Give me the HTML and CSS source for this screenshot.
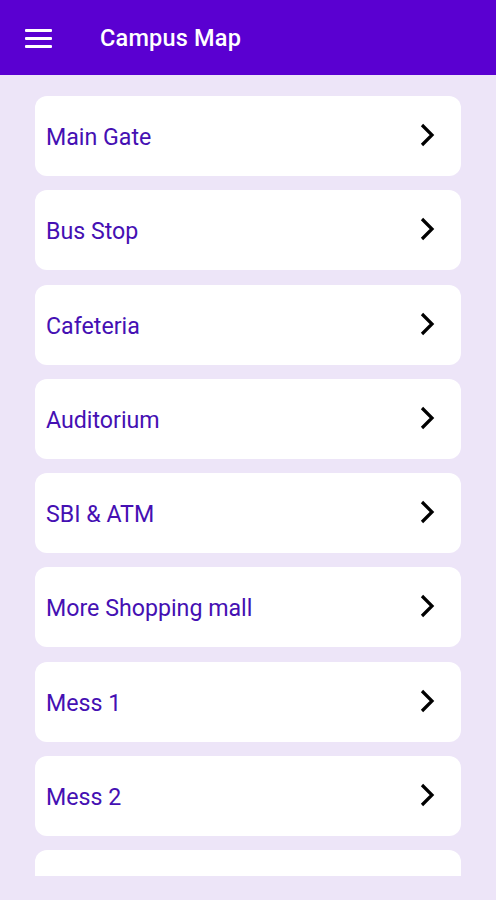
FILE: index.html
```html
<!DOCTYPE html>
<html lang="en">
<head>
  <meta charset="UTF-8">
  <title>Campus Map</title>
  <link rel="stylesheet" href="styles.css">
</head>
<body>
  <header class="app-bar">
    <button class="menu-btn" aria-label="Menu">
      <span></span><span></span><span></span>
    </button>
    <h1>Campus Map</h1>
  </header>

  <main class="place-list">
    <div class="place-card"><span>Main Gate</span><svg class="chevron" viewBox="0 0 16 26"><path d="M3 3 L13 13 L3 23" /></svg></div>
    <div class="place-card"><span>Bus Stop</span><svg class="chevron" viewBox="0 0 16 26"><path d="M3 3 L13 13 L3 23" /></svg></div>
    <div class="place-card"><span>Cafeteria</span><svg class="chevron" viewBox="0 0 16 26"><path d="M3 3 L13 13 L3 23" /></svg></div>
    <div class="place-card"><span>Auditorium</span><svg class="chevron" viewBox="0 0 16 26"><path d="M3 3 L13 13 L3 23" /></svg></div>
    <div class="place-card"><span>SBI &amp; ATM</span><svg class="chevron" viewBox="0 0 16 26"><path d="M3 3 L13 13 L3 23" /></svg></div>
    <div class="place-card"><span>More Shopping mall</span><svg class="chevron" viewBox="0 0 16 26"><path d="M3 3 L13 13 L3 23" /></svg></div>
    <div class="place-card"><span>Mess 1</span><svg class="chevron" viewBox="0 0 16 26"><path d="M3 3 L13 13 L3 23" /></svg></div>
    <div class="place-card"><span>Mess 2</span><svg class="chevron" viewBox="0 0 16 26"><path d="M3 3 L13 13 L3 23" /></svg></div>
    <!-- next item is scrolled below the fold -->
    <div class="place-card"></div>
  </main>
</body>
</html>
```

FILE: styles.css
```css
* {
  margin: 0;
  padding: 0;
  box-sizing: border-box;
}
body {
  font-family: Roboto, "Liberation Sans", Arial, sans-serif;
  background-color: #ede5f8;
  height: 900px;
  overflow: hidden;
}
.app-bar {
  height: 75px;
  background-color: #5a00d1;
  display: flex;
  align-items: center;
  padding-left: 25px;
}
.app-bar h1 {
  color: #ffffff;
  font-size: 23.5px;
  font-weight: 500;
  margin-left: 48px;
  letter-spacing: 0.2px;
}
.menu-btn {
  width: 27px;
  height: 19px;
  border: none;
  background: none;
  display: flex;
  flex-direction: column;
  justify-content: space-between;
  margin-top: 1px;
}
.menu-btn span {
  display: block;
  height: 3px;
  background-color: #ffffff;
  border-radius: 1px;
}
.place-list {
  height: 801px;
  overflow: hidden;
  padding: 21px 35px 0;
  display: flex;
  flex-direction: column;
  gap: 14.3px;
}
.place-card {
  flex: none;
  height: 80px;
  background-color: #ffffff;
  border-radius: 12px;
  display: flex;
  align-items: center;
  justify-content: space-between;
  padding: 2px 26px 0 11px;
}
.place-card span {
  color: #4510b3;
  font-size: 23.2px;
}
.chevron {
  width: 16px;
  height: 26px;
  fill: none;
  stroke: #000000;
  stroke-width: 3.2px;
  margin-top: -4px;
}
```
